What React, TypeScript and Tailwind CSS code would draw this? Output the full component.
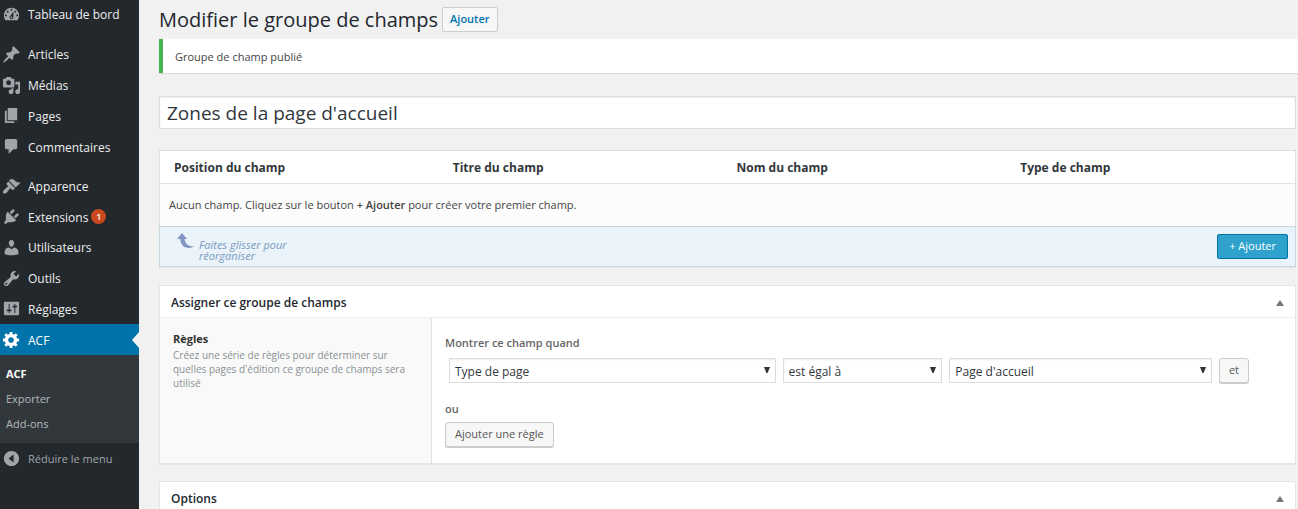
import { useState, type ReactNode } from "react";

const icons = {
  dashboard:
    "M3.76 16h12.48c1.1-1.37 1.76-3.11 1.76-5 0-4.42-3.58-8-8-8s-8 3.58-8 8c0 1.89.66 3.63 1.76 5zM10 4c.55 0 1 .45 1 1s-.45 1-1 1-1-.45-1-1 .45-1 1-1zM6 6c.55 0 1 .45 1 1s-.45 1-1 1-1-.45-1-1 .45-1 1-1zm8 0c.55 0 1 .45 1 1s-.45 1-1 1-1-.45-1-1 .45-1 1-1zm-5.37 5.55L12 7v6c0 1.1-.9 2-2 2s-2-.9-2-2c0-.57.24-1.08.63-1.45zM4 10c.55 0 1 .45 1 1s-.45 1-1 1-1-.45-1-1 .45-1 1-1zm12 0c.55 0 1 .45 1 1s-.45 1-1 1-1-.45-1-1 .45-1 1-1zm-5 3c0-.55-.45-1-1-1s-1 .45-1 1 .45 1 1 1 1-.45 1-1z",
  post:
    "M10.44 3.02l1.82-1.82 6.36 6.35-1.83 1.82c-1.05-.68-2.48-.57-3.41.36l-.75.75c-.92.93-1.04 2.35-.35 3.41l-1.83 1.82-2.41-2.41-2.8 2.79c-.42.42-3.38 2.71-3.8 2.29s1.86-3.39 2.28-3.81l2.79-2.79L4.1 9.36l1.83-1.82c1.05.69 2.48.57 3.4-.36l.75-.75c.93-.92 1.05-2.35.36-3.41z",
  media:
    "M13 11V4c0-.55-.45-1-1-1h-1.67L9 1H5L3.67 3H2c-.55 0-1 .45-1 1v7c0 .55.45 1 1 1h10c.55 0 1-.45 1-1zM7 4.5c1.38 0 2.5 1.12 2.5 2.5S8.38 9.5 7 9.5 4.5 8.38 4.5 7 5.62 4.5 7 4.5zM14 6h5v10.5c0 1.38-1.12 2.5-2.5 2.5S14 17.88 14 16.5s1.12-2.5 2.5-2.5c.17 0 .34.02.5.05V9h-3V6zm-4 8.05V13h2v3.5c0 1.38-1.12 2.5-2.5 2.5S7 17.88 7 16.5 8.12 14 9.5 14c.17 0 .34.02.5.05z",
  page: "M6 15V2h10v13H6zm-1 1h8v2H3V5h2v11z",
  comments:
    "M5 2h9c1.1 0 2 .9 2 2v7c0 1.1-.9 2-2 2h-2l-5 5v-5H5c-1.1 0-2-.9-2-2V4c0-1.1.9-2 2-2z",
  appearance:
    "M14.48 11.06L7.41 3.99l1.5-1.5c.5-.56 2.3-.47 3.51.32 1.21.8 1.43 1.28 2.91 2.1 1.18.64 2.45 1.26 4.45.85zm-.71.71L6.7 4.7 4.93 6.47c-.39.39-.39 1.02 0 1.41l1.06 1.06c.39.39.39 1.03 0 1.42-.6.6-1.43 1.11-2.21 1.69-.35.26-.7.53-1.01.84C1.43 14.23.4 16.08 1.4 17.07c.99 1 2.84-.03 4.18-1.36.31-.31.58-.66.85-1.02.57-.78 1.08-1.61 1.69-2.21.39-.39 1.02-.39 1.41 0l1.06 1.06c.39.39 1.02.39 1.41 0z",
  plugins:
    "M13.11 4.36L9.87 7.6 8 5.73l3.24-3.24c.35-.34 1.05-.2 1.56.32.52.51.66 1.21.31 1.55zm-8 1.77l.91-1.12 9.01 9.01-1.19.84c-.71.71-2.63 1.16-3.82 1.16H6.14L4.9 17.26c-.59.59-1.54.59-2.12 0-.59-.58-.59-1.53 0-2.12l1.24-1.24v-3.88c0-1.13.4-3.19 1.09-3.89zm7.26 3.97l3.24-3.24c.34-.35 1.04-.21 1.55.31.52.51.66 1.21.31 1.55l-3.24 3.25z",
  users:
    "M10 9.25c-2.27 0-2.73-3.44-2.73-3.44C7 4.02 7.82 2 9.97 2c2.16 0 2.98 2.02 2.71 3.81 0 0-.41 3.44-2.68 3.44zm0 2.57L12.72 10c2.39 0 4.52 2.33 4.52 4.53v2.49s-3.65 1.13-7.24 1.13c-3.65 0-7.24-1.13-7.24-1.13v-2.49c0-2.25 1.94-4.48 4.47-4.48z",
  tools:
    "M16.68 9.77c-1.34 1.34-3.3 1.67-4.95.99l-5.41 6.52c-.99.99-2.59.99-3.58 0s-.99-2.59 0-3.57l6.52-5.42c-.68-1.65-.35-3.61.99-4.95 1.28-1.28 3.12-1.62 4.72-1.06l-2.89 2.89 2.82 2.82 2.86-2.87c.53 1.58.18 3.39-1.08 4.65zM3.81 16.21c.4.39 1.04.39 1.43 0 .4-.4.4-1.04 0-1.43-.39-.4-1.03-.4-1.43 0-.39.39-.39 1.03 0 1.43z",
  settings:
    "M18 16V4c0-.55-.45-1-1-1H3c-.55 0-1 .45-1 1v12c0 .55.45 1 1 1h14c.55 0 1-.45 1-1zM8 11h1c.55 0 1 .45 1 1s-.45 1-1 1H8v1.5c0 .28-.22.5-.5.5s-.5-.22-.5-.5V13H6c-.55 0-1-.45-1-1s.45-1 1-1h1V5.5c0-.28.22-.5.5-.5s.5.22.5.5V11zm5-2h-1c-.55 0-1-.45-1-1s.45-1 1-1h1V5.5c0-.28.22-.5.5-.5s.5.22.5.5V7h1c.55 0 1 .45 1 1s-.45 1-1 1h-1v5.5c0 .28-.22.5-.5.5s-.5-.22-.5-.5V9z",
  generic:
    "M18 12h-2.18c-.17.7-.44 1.35-.81 1.93l1.54 1.54-2.1 2.1-1.54-1.54c-.58.36-1.23.63-1.91.79V19H8v-2.18c-.68-.16-1.33-.43-1.91-.79l-1.54 1.54-2.12-2.12 1.54-1.54c-.36-.58-.63-1.23-.79-1.91H1V9.03h2.17c.16-.7.44-1.35.8-1.94L2.43 5.55l2.1-2.1 1.54 1.54c.58-.37 1.24-.64 1.93-.81V2h3v2.18c.68.16 1.33.43 1.91.79l1.54-1.54 2.12 2.12-1.54 1.54c.36.59.64 1.24.8 1.94H18V12zm-8.5 1.5c1.66 0 3-1.34 3-3s-1.34-3-3-3-3 1.34-3 3 1.34 3 3 3z",
  collapse:
    "M10 2c4.42 0 8 3.58 8 8s-3.58 8-8 8-8-3.58-8-8 3.58-8 8-8zM12.2 5.8L6.8 10l5.4 4.2z",
};

type IconName = keyof typeof icons;

function Icon({ name }: { name: IconName }) {
  return (
    <svg viewBox="0 0 20 20" className="size-[19px] shrink-0 fill-current" aria-hidden="true">
      <path fillRule="evenodd" d={icons[name]} />
    </svg>
  );
}

function MenuItem({ icon, label, badge }: { icon: IconName; label: string; badge?: string }) {
  return (
    <li className="flex items-center text-[#a0a5aa]">
      <a href="#" className="flex w-full items-center gap-[7px] pl-[2px]">
        <Icon name={icon} />
        <span className="pt-[2px] text-[#eee]">{label}</span>
        {badge && (
          <span className="-ml-1 flex size-[15px] items-center justify-center rounded-full bg-[#ca4a1f] text-[9px] font-semibold text-white">
            {badge}
          </span>
        )}
      </a>
    </li>
  );
}

function Sidebar() {
  return (
    <nav aria-label="Menu principal" className="w-[139px] shrink-0 bg-[#23282d] text-[12px] leading-[18px]">
      <ul className="grid h-[28px] auto-rows-fr">
        <MenuItem icon="dashboard" label="Tableau de bord" />
      </ul>
      <ul className="mt-[11px] grid h-[123px] auto-rows-fr">
        <MenuItem icon="post" label="Articles" />
        <MenuItem icon="media" label="Médias" />
        <MenuItem icon="page" label="Pages" />
        <MenuItem icon="comments" label="Commentaires" />
      </ul>
      <ul className="mt-[9px] grid h-[153px] auto-rows-fr">
        <MenuItem icon="appearance" label="Apparence" />
        <MenuItem icon="plugins" label="Extensions" badge="1" />
        <MenuItem icon="users" label="Utilisateurs" />
        <MenuItem icon="tools" label="Outils" />
        <MenuItem icon="settings" label="Réglages" />
      </ul>
      <a href="#" className="relative flex h-[31px] items-center gap-[7px] bg-[#0073aa] pl-[2px] text-white">
        <Icon name="generic" />
        <span className="pt-[2px]">ACF</span>
        <span className="absolute top-2 right-0 border-y-8 border-r-[7px] border-y-transparent border-r-[#f1f1f1]" />
      </a>
      <ul className="bg-[#32373c] pt-[6px] pb-[7px] pl-[6px] text-[11px] leading-[25px] text-[#b4b9be]">
        <li>
          <a href="#" className="font-bold text-white">ACF</a>
        </li>
        <li>
          <a href="#">Exporter</a>
        </li>
        <li>
          <a href="#">Add-ons</a>
        </li>
      </ul>
      <button type="button" className="flex h-[31px] items-center gap-[7px] pl-[2px] text-[11px] text-[#a0a5aa]">
        <Icon name="collapse" />
        Réduire le menu
      </button>
    </nav>
  );
}

function Panel({ title, children }: { title: string; children?: ReactNode }) {
  return (
    <section className="border border-[#e5e5e5] bg-white shadow-[0_1px_1px_rgba(0,0,0,0.04)]">
      <header className="flex h-8 items-center justify-between border-b border-[#eee] px-[11px] pt-[2px]">
        <h2 className="text-[12px] font-semibold text-[#23282d]">{title}</h2>
        <button type="button" aria-label={"Replier " + title} className="text-[#72777c]">
          <svg viewBox="0 0 8 6" className="h-[6px] w-2 fill-current" aria-hidden="true">
            <path d="M4 0l4 6H0z" />
          </svg>
        </button>
      </header>
      {children}
    </section>
  );
}

function Select({ label, options }: { label: string; options: string[] }) {
  const [value, setValue] = useState(options[0]);
  return (
    <div className="relative">
      <select
        aria-label={label}
        value={value}
        onChange={(e) => setValue(e.target.value)}
        className="h-[25px] w-full appearance-none border border-[#ddd] bg-white pt-[2px] pl-[5px] text-[12px] leading-[18px] text-[#32373c] shadow-[inset_0_1px_2px_rgba(0,0,0,0.07)]"
      >
        {options.map((option) => (
          <option key={option}>{option}</option>
        ))}
      </select>
      <svg
        viewBox="0 0 6 6"
        className="pointer-events-none absolute top-[9px] right-[6px] size-[6px] fill-[#32373c]"
        aria-hidden="true"
      >
        <path d="M0 0h6L3.6 6H2.4z" />
      </svg>
    </div>
  );
}

const smallButton =
  "h-[25px] rounded-[3px] border border-[#ccc] bg-[#f7f7f7] text-[11px] text-[#555] shadow-[0_1px_0_#ccc]";

export default function App() {
  const [title, setTitle] = useState("Zones de la page d'accueil");
  return (
    <div className="flex h-screen overflow-hidden bg-[#f1f1f1] font-['Open_Sans','Noto_Sans',sans-serif] text-[11px] text-[#444]">
      <Sidebar />
      <main className="min-w-0 flex-1 pr-[2px] pl-5">
        <div className="flex h-[39px] items-center gap-1">
          <h1 className="text-[20px] leading-[26px] text-[#23282d]">Modifier le groupe de champs</h1>
          <a
            href="#"
            className="flex h-[25px] items-center rounded-[2px] border border-[#ccc] bg-[#f7f7f7] px-[7px] text-[11px] font-semibold text-[#0073aa]"
          >
            Ajouter
          </a>
        </div>

        <p className="-mr-[2px] flex h-[34px] items-center border-l-4 border-[#46b450] bg-white pt-[2px] pl-3 shadow-[0_1px_1px_rgba(0,0,0,0.1)]">
          Groupe de champ publié
        </p>

        <input
          type="text"
          aria-label="Titre du groupe de champs"
          value={title}
          onChange={(e) => setTitle(e.target.value)}
          className="mt-[23px] block h-[33px] w-full border border-[#ddd] bg-white px-[7px] text-[19px] text-[#32373c] shadow-[inset_0_1px_2px_rgba(0,0,0,0.07)]"
        />

        <div className="mt-[21px] border border-[#dfdfdf] bg-[#fcfcfc] shadow-[0_1px_1px_rgba(0,0,0,0.04)]">
          <table className="w-full table-fixed border-collapse text-left">
            <thead className="border-b border-[#e1e1e1] bg-white text-[12px] text-[#32373c]">
              <tr className="h-8">
                <th className="pt-[2px] pl-[14px] font-bold">Position du champ</th>
                <th className="pt-[2px] pl-[9px] font-bold">Titre du champ</th>
                <th className="pt-[2px] pl-[9px] font-bold">Nom du champ</th>
                <th className="pt-[2px] pl-[9px] font-bold">Type de champ</th>
              </tr>
            </thead>
            <tbody>
              <tr className="h-[43px]">
                <td colSpan={4} className="pl-[9px]">
                  Aucun champ. Cliquez sur le bouton <strong className="font-semibold">+ Ajouter</strong> pour créer
                  votre premier champ.
                </td>
              </tr>
            </tbody>
          </table>
          <div className="-mx-px -mb-px flex h-[41px] items-center justify-between border border-[#c7d7e2] bg-[#eaf2fa] pr-[7px] pl-[17px]">
            <div className="flex gap-[5px] text-[#7a9bbe]">
              <svg viewBox="0 0 17 16" className="mt-px h-4 w-[17px] fill-[#8196c3]" aria-hidden="true">
                <path d="M5 0L10 6H7.5C8 10.500 11 13.500 17 13.500C10.500 17 3.500 14 3.200 6H0z" />
              </svg>
              <p className="w-[100px] pt-[7px] text-[11px] leading-[11px] italic">Faites glisser pour réorganiser</p>
            </div>
            <button
              type="button"
              className="h-[25px] rounded-[2px] border border-[#0074a2] bg-[#2ea2cc] px-[11px] text-[11px] text-white"
            >
              + Ajouter
            </button>
          </div>
        </div>

        <div className="mt-[18px] flex flex-col gap-[17px]">
          <Panel title="Assigner ce groupe de champs">
            <div className="flex h-[145px]">
              <div className="w-[272px] shrink-0 border-r border-[#e1e1e1] bg-[#f9f9f9] pt-3 pr-4 pl-[13px]">
                <h3 className="text-[11px] leading-[17px] font-bold text-[#333]">Règles</h3>
                <p className="pt-px text-[10px] leading-[14px] text-[#899194]">
                  Créez une série de règles pour déterminer sur quelles pages d'édition ce groupe de champs sera
                  utilisé
                </p>
              </div>
              <div className="flex-1 pt-4 pr-[46px] pl-[13px]">
                <h4 className="text-[11px] leading-[17px] font-semibold text-[#666]">Montrer ce champ quand</h4>
                <div className="mt-[7px] grid grid-cols-[327fr_160fr_263fr_30px] gap-[7px] pl-1">
                  <Select label="Paramètre" options={["Type de page", "Modèle de page", "Page parente"]} />
                  <Select label="Opérateur" options={["est égal à", "n'est pas égal à"]} />
                  <Select label="Valeur" options={["Page d'accueil", "Page des articles"]} />
                  <button type="button" className={smallButton}>
                    et
                  </button>
                </div>
                <h4 className="mt-[17px] text-[11px] leading-[17px] font-semibold text-[#666]">ou</h4>
                <button type="button" className={smallButton + " mt-[5px] px-[9px]"}>
                  Ajouter une règle
                </button>
              </div>
            </div>
          </Panel>
          <Panel title="Options" />
        </div>
      </main>
    </div>
  );
}
